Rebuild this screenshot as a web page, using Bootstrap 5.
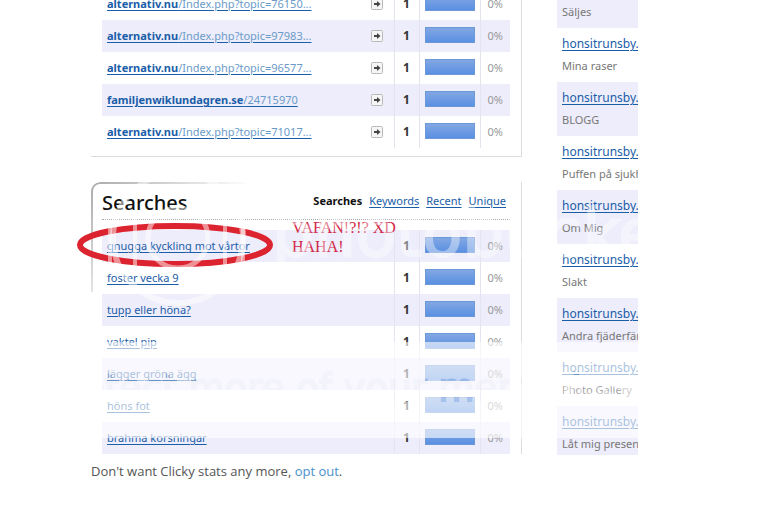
<!DOCTYPE html>
<html lang="sv">
<head>
<meta charset="utf-8">
<meta name="viewport" content="width=device-width, initial-scale=1">
<title>Clicky stats</title>
<link href="https://cdn.jsdelivr.net/npm/bootstrap@5.3.0/dist/css/bootstrap.min.css" rel="stylesheet">
<style>
body{font-family:"Noto Sans","Open Sans",sans-serif;font-size:11px;line-height:16px;color:#777;background:#fff}
.stats{padding-left:91px;padding-right:140px;gap:35px;max-height:455px}
.sources{margin-top:-12px}
.panel{padding:0 11px 8px 11px;border-right:1px solid #ddd;border-bottom:1px solid #ddd;margin-bottom:25px}
.searches{border-right:1px solid #ddd;padding:0 11px}
.searches::before{content:"";position:absolute;inset:0 1px auto 0;height:110px;border:2px solid #aaa;border-right:0;border-bottom:0;border-radius:9px 0 0 0;-webkit-mask:linear-gradient(135deg,#000,transparent 30%);mask:linear-gradient(135deg,#000,transparent 30%)}
.hits{width:100%;table-layout:fixed}
.hits tr{height:32px}
.hits tr.tint,.page.tint{background:#eeedfb}
.hits td{padding:0;border-left:1px solid #e4e4f0;vertical-align:middle;white-space:nowrap}
.hits td:first-child{padding-left:5px;border-left:0}
.c-go{width:33px}
.c-num{width:25px}
.c-bar{width:61px}
.c-pct{width:30px}
.hits td.go{border-left:0}
.hits a,.page a,.tabs a{color:#1a5da8;text-decoration:underline;text-underline-offset:2px}
.hits a span{color:#6b9bc8}
.hits td.num{font-size:12px;font-weight:700;color:#333;text-align:center}
.hits td.pct{text-align:center;color:#999}
.meter{height:16px;width:50px;margin-left:5px;margin-bottom:2px;background:linear-gradient(#82a7e3,#5a90e2);border:1px solid #6d98d8}
.go svg{display:block;margin:auto}
.head{height:38px;border-bottom:1px dotted #aaa;margin-bottom:10px;padding-right:4px}
.head h2{font-size:20px;line-height:24px;color:#111;font-weight:500;padding-top:4px}
.tabs{gap:7px;color:#111}
.pages{width:81px;margin-top:-26px}
.page{height:54px;padding:8px 0 0 5px;white-space:nowrap;overflow:hidden}
.page a{display:block;font-size:12px}
.page span{display:block;margin-top:6px}
.foot{padding-left:91px;padding-top:8px;font-family:"Open Sans","Noto Sans",sans-serif;font-size:13px;color:#555}
.foot a{color:#4a90cc;text-decoration:none}
.ring{left:-15px;top:40px}
.note{left:201px;top:36px;font:16px/19px "Liberation Serif",serif;color:#d22a48}
.veil{left:0;top:0;pointer-events:none}
</style>
<script src="https://cdn.jsdelivr.net/npm/bootstrap@5.3.0/dist/js/bootstrap.bundle.min.js"></script>
</head>
<body>
<svg width="0" height="0" class="position-absolute" aria-hidden="true"><symbol id="go" viewBox="0 0 12 12"><rect x=".5" y=".5" width="11" height="11" rx="1" fill="#f6f6f6" stroke="#b9b9b9"/><path d="M3 5h3V3l3.500 3L6 9V7H3z" fill="#444"/></symbol></svg>
<main class="stats d-flex overflow-hidden position-relative">
<div class="flex-grow-1 sources">
<section class="panel">
<table class="hits">
<colgroup><col><col class="c-go"><col class="c-num"><col class="c-bar"><col class="c-pct"></colgroup>
<tbody>
<tr><td><a href="#"><b>alternativ.nu</b><span>/Index.php?topic=76150...</span></a></td><td class="go"><svg width="12" height="12"><use href="#go"/></svg></td><td class="num">1</td><td><div class="meter"></div></td><td class="pct">0%</td></tr>
<tr class="tint"><td><a href="#"><b>alternativ.nu</b><span>/Index.php?topic=97983...</span></a></td><td class="go"><svg width="12" height="12"><use href="#go"/></svg></td><td class="num">1</td><td><div class="meter"></div></td><td class="pct">0%</td></tr>
<tr><td><a href="#"><b>alternativ.nu</b><span>/Index.php?topic=96577...</span></a></td><td class="go"><svg width="12" height="12"><use href="#go"/></svg></td><td class="num">1</td><td><div class="meter"></div></td><td class="pct">0%</td></tr>
<tr class="tint"><td><a href="#"><b>familjenwiklundagren.se</b><span>/24715970</span></a></td><td class="go"><svg width="12" height="12"><use href="#go"/></svg></td><td class="num">1</td><td><div class="meter"></div></td><td class="pct">0%</td></tr>
<tr><td><a href="#"><b>alternativ.nu</b><span>/Index.php?topic=71017...</span></a></td><td class="go"><svg width="12" height="12"><use href="#go"/></svg></td><td class="num">1</td><td><div class="meter"></div></td><td class="pct">0%</td></tr>
</tbody>
</table>
</section>
<section class="searches position-relative">
<div class="head d-flex align-items-center justify-content-between">
<h2 class="m-0">Searches</h2>
<nav class="d-flex tabs"><b>Searches</b><a href="#">Keywords</a><a href="#">Recent</a><a href="#">Unique</a></nav>
</div>
<table class="hits">
<colgroup><col><col class="c-num"><col class="c-bar"><col class="c-pct"></colgroup>
<tbody>
<tr class="tint"><td><a href="#">gnugga kyckling mot vårtor</a></td><td class="num">1</td><td><div class="meter"></div></td><td class="pct">0%</td></tr>
<tr><td><a href="#">foster vecka 9</a></td><td class="num">1</td><td><div class="meter"></div></td><td class="pct">0%</td></tr>
<tr class="tint"><td><a href="#">tupp eller höna?</a></td><td class="num">1</td><td><div class="meter"></div></td><td class="pct">0%</td></tr>
<tr><td><a href="#">vaktel pip</a></td><td class="num">1</td><td><div class="meter"></div></td><td class="pct">0%</td></tr>
<tr class="tint"><td><a href="#">lägger gröna ägg</a></td><td class="num">1</td><td><div class="meter"></div></td><td class="pct">0%</td></tr>
<tr><td><a href="#">höns fot</a></td><td class="num">1</td><td><div class="meter"></div></td><td class="pct">0%</td></tr>
<tr class="tint"><td><a href="#">brahma korsningar</a></td><td class="num">1</td><td><div class="meter"></div></td><td class="pct">0%</td></tr>
</tbody>
</table>
<svg class="ring position-absolute" width="200" height="46" aria-hidden="true"><ellipse cx="99" cy="23" rx="95" ry="19" fill="none" stroke="#dc2430" stroke-width="6"/></svg>
<div class="note position-absolute">VAFAN!?!? XD<br>HAHA!</div>
</section>
</div>
<aside class="pages flex-shrink-0">
<div class="page tint"><a href="#">honsitrunsby.</a><span>Säljes</span></div>
<div class="page"><a href="#">honsitrunsby.</a><span>Mina raser</span></div>
<div class="page tint"><a href="#">honsitrunsby.</a><span>BLOGG</span></div>
<div class="page"><a href="#">honsitrunsby.</a><span>Puffen på sjukh</span></div>
<div class="page tint"><a href="#">honsitrunsby.</a><span>Om Mig</span></div>
<div class="page"><a href="#">honsitrunsby.</a><span>Slakt</span></div>
<div class="page tint"><a href="#">honsitrunsby.</a><span>Andra fjäderfän</span></div>
<div class="page"><a href="#">honsitrunsby.</a><span>Photo Gallery</span></div>
<div class="page tint"><a href="#">honsitrunsby.</a><span>Låt mig present</span></div>
</aside>
<svg class="veil position-absolute" width="638" height="455" aria-hidden="true">
<defs><mask id="cut"><rect width="638" height="455" fill="#fff"/><text x="46" y="401" font-family="DejaVu Sans" font-size="37" fill="#888" stroke="#888" stroke-width="2">Protect more of your memories for less!</text></mask></defs>
<rect y="342" width="638" height="96" fill="#fff" fill-opacity=".62" mask="url(#cut)"/>
<g fill="none" stroke="#fff" stroke-opacity=".5">
<circle cx="178" cy="238" r="65" stroke-width="6"/>
<circle cx="178" cy="238" r="30" stroke-width="5"/>
<path d="M110 220v50M135 215v55M225 215v55M243 215v50" stroke-width="4"/>
</g>
<text x="272" y="256" font-family="DejaVu Sans" font-size="66" fill="#fff" stroke="#fff" stroke-width="2" opacity=".4">photobucket</text>
</svg>
</main>
<p class="foot">Don't want Clicky stats any more, <a href="#">opt out</a>.</p>
</body>
</html>
